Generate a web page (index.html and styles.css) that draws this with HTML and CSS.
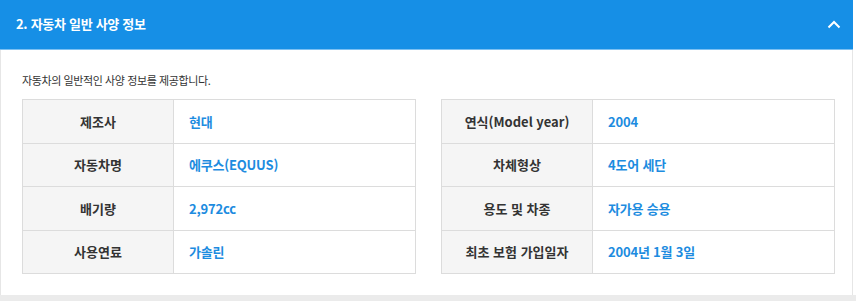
FILE: index.html
```html
<!DOCTYPE html>
<html lang="ko">
<head>
    <meta charset="UTF-8">
    <meta name="viewport" content="width=device-width, initial-scale=1.0">
    <title>자동차 일반 사양 정보</title>
    <link rel="stylesheet" href="styles.css">
</head>
<body>
    <section class="panel">
        <div class="panel-head">
            <h3>2. 자동차 일반 사양 정보</h3>
            <svg class="toggle" width="14" height="9" viewBox="0 0 14 9">
                <path d="M1.5 7.5 L7 2 L12.5 7.5" fill="none" stroke="#fff" stroke-width="2"/>
            </svg>
        </div>
        <div class="panel-body">
            <p class="desc">자동차의 일반적인 사양 정보를 제공합니다.</p>
            <div class="tables">
                <table class="spec">
                    <tr><th>제조사</th><td>현대</td></tr>
                    <tr><th>자동차명</th><td>에쿠스(EQUUS)</td></tr>
                    <tr><th>배기량</th><td>2,972cc</td></tr>
                    <tr><th>사용연료</th><td>가솔린</td></tr>
                </table>
                <table class="spec">
                    <tr><th>연식(Model year)</th><td>2004</td></tr>
                    <tr><th>차체형상</th><td>4도어 세단</td></tr>
                    <tr><th>용도 및 차종</th><td>자가용 승용</td></tr>
                    <tr><th>최초 보험 가입일자</th><td>2004년 1월 3일</td></tr>
                </table>
            </div>
        </div>
    </section>
    <div class="footer-strip"></div>
</body>
</html>
```

FILE: styles.css
```css
body {
    margin: 0;
    font-family: "Noto Sans CJK KR", "Noto Sans", sans-serif;
    background-color: #fff;
    color: #333;
}
.panel {
    border-left: 1px solid #e6e6e6;
    border-right: 1px solid #e6e6e6;
    margin-right: 3px;
}
.panel-head {
    display: flex;
    align-items: center;
    justify-content: space-between;
    height: 50px;
    padding: 0 12px 0 16px;
    background-color: #168fe6;
    border-bottom: 1px solid #7cc0f2;
    box-sizing: border-box;
    margin: 0 -1px;
}
.panel-head h3 {
    margin: 0 0 2px 0;
    font-size: 13px;
    font-weight: 700;
    color: #fff;
    letter-spacing: -0.3px;
}
.toggle {
    display: block;
}
.panel-body {
    padding: 22px 21px 21px 21px;
}
.desc {
    margin: 0 0 11px 0;
    font-size: 11px;
    line-height: 16px;
    color: #333;
    letter-spacing: -0.4px;
}
.tables {
    display: grid;
    grid-template-columns: 394px 394px;
    column-gap: 25px;
}
.spec {
    width: 394px;
    border-collapse: collapse;
    table-layout: fixed;
}
.spec th,
.spec td {
    height: 42.5px;
    border: 1px solid #dcdcdc;
    font-size: 13px;
    font-weight: 700;
    padding: 0;
}
.spec th {
    width: 150px;
    background-color: #f5f5f5;
    color: #333;
    text-align: center;
}
.spec td {
    padding-left: 15px;
    color: #1d8ce0;
    text-align: left;
    letter-spacing: -0.2px;
}
.footer-strip {
    height: 8px;
    background-color: #ebebeb;
}
```
